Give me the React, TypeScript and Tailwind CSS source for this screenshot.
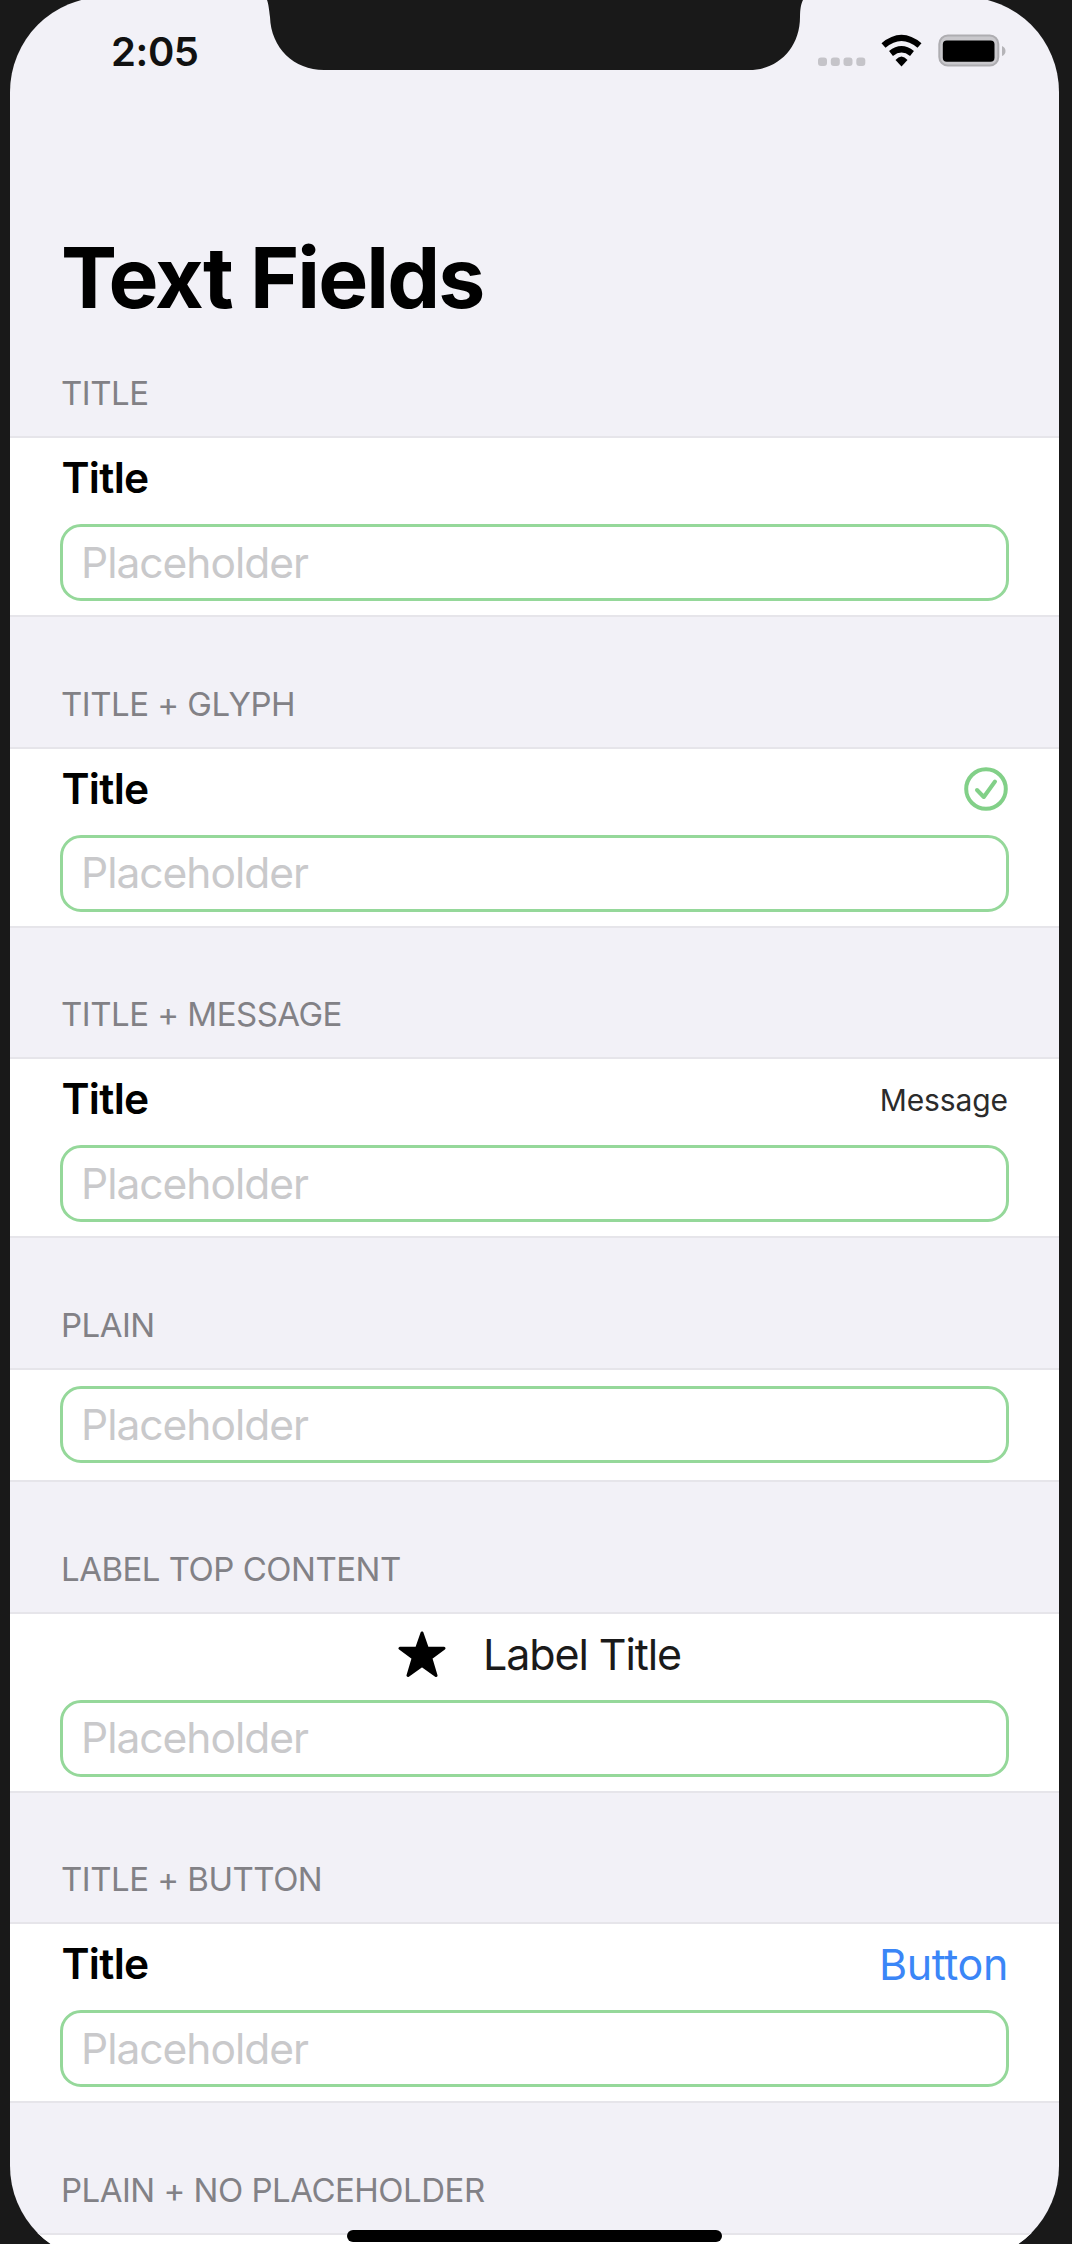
import type { ReactNode } from "react";

function Notch() {
  return (
    <svg className="absolute left-[257px] top-[3px]" width="537" height="71" viewBox="0 0 537 71" fill="#191919">
      <path d="M0 0C1.500 4 2 9 3 17C4 48 27 70 57 70H482C511 70 533 48 533 17C533 9 534 4 536 0Z" />
    </svg>
  );
}

function StatusIcons() {
  return (
    <svg className="absolute left-[806px] top-[34px]" width="192" height="40" viewBox="0 0 192 40">
      <g fill="#c5c4c9">
        <rect x="2" y="26.500" width="9" height="8.500" rx="3" />
        <rect x="14.800" y="26.500" width="9" height="8.500" rx="3" />
        <rect x="27.500" y="26.500" width="9" height="8.500" rx="3" />
        <rect x="40.300" y="26.500" width="9" height="8.500" rx="3" />
      </g>
      <g fill="none" stroke="#000" strokeWidth="6.200">
        <path d="M67.500 14.500Q85.500 -0.800 103.500 14.500" />
        <path d="M75 22.500Q85.500 14 96 22.500" />
      </g>
      <path d="M79.500 29Q85.500 22 91.500 29L85.500 35.500Z" />
      <rect x="123.300" y="4.500" width="59" height="30" rx="8.500" fill="#c9c8cc" stroke="#aeadb1" strokeWidth="2" />
      <rect x="126.800" y="9.500" width="51.700" height="21.200" rx="4" />
      <path d="M186 15Q189.500 16.500 189.500 20Q189.500 23.500 186 25Z" fill="#b5b4b8" />
    </svg>
  );
}

function CheckGlyph() {
  return (
    <svg width="44" height="44" viewBox="0 0 44 44" fill="none" stroke="#82d088" strokeWidth="4">
      <circle cx="22" cy="22" r="19.800" />
      <path d="M13 23L19.800 30L31 14.500" strokeLinejoin="round" strokeLinecap="round" />
    </svg>
  );
}

function StarGlyph() {
  return (
    <svg width="48" height="47" viewBox="0 0 48 47" stroke="#000" strokeWidth="3" strokeLinejoin="round">
      <path d="M24 2L29.300 17.300H46L32.800 27L38 44.500L24 34.500L10 44.500L15.200 27L2 17.300H18.700Z" />
    </svg>
  );
}

function Field() {
  return (
    <div className="flex h-[77px] w-[949px] shrink-0 items-center rounded-[21px] border-[3px] border-[#95d89a] pl-[18px] pt-[1px] text-[42.5px] leading-none tracking-[-1px] text-[#c9c9cb]">
      Placeholder
    </div>
  );
}

type SectionProps = { header: string; children?: ReactNode; kind?: "labelled" | "plain" | "empty" };

function Section({ header, children, kind = "labelled" }: SectionProps) {
  return (
    <section>
      <h2 className="flex h-[129.500px] items-end pb-[23px] pl-[51px] text-[33px] leading-[40px] tracking-[-0.500px] text-[#828186]">
        {header}
      </h2>
      <div className="border-y-2 border-[#e6e5ea] bg-white pl-[50px]">
        {kind === "labelled" && (
          <div className="h-[177px]">
            <div className="flex h-[86px] w-[948px] items-center justify-between pb-[5px] pl-[1.500px]">{children}</div>
            <Field />
          </div>
        )}
        {kind === "plain" && (
          <div className="flex h-[110.500px] items-center">
            <Field />
          </div>
        )}
        {kind === "empty" && <div className="h-[110px]" />}
      </div>
    </section>
  );
}

function Title() {
  return <span className="text-[42.500px] font-semibold leading-none tracking-[-0.700px] text-black">Title</span>;
}

export default function App() {
  return (
    <div className="h-[2244px] w-[1072px] overflow-hidden bg-[#191919] font-['Inter',sans-serif]">
      <main className="relative -mt-[3px] ml-[10px] h-[2264px] w-[1049px] overflow-hidden rounded-[95px] bg-[#f2f1f7]">
        <Notch />
        <StatusIcons />
        <header className="h-[309.700px]">
          <div className="pl-[101px] pt-[31px] text-[40px] font-semibold leading-[48px] tracking-[-0.400px] text-[#111]">2:05</div>
          <h1 className="mt-[152px] pl-[51px] text-[84px] font-bold leading-[100px] tracking-[-1.900px] text-black">Text Fields</h1>
        </header>
        <Section header="TITLE">
          <Title />
        </Section>
        <Section header="TITLE + GLYPH">
          <Title />
          <CheckGlyph />
        </Section>
        <Section header="TITLE + MESSAGE">
          <Title />
          <span className="text-[30px] leading-none tracking-[-0.100px] text-[#2b2b2b]">Message</span>
        </Section>
        <Section header="PLAIN" kind="plain" />
        <Section header="LABEL TOP CONTENT">
          <div className="flex w-full items-center pl-[336.500px]">
            <StarGlyph />
            <span className="ml-[37px] text-[43px] leading-none tracking-[-1.100px] text-[#1a1a1a]">Label Title</span>
          </div>
        </Section>
        <Section header="TITLE + BUTTON">
          <Title />
          <button className="text-[43px] leading-none tracking-[-0.400px] text-[#3b86f7]">Button</button>
        </Section>
        <Section header="PLAIN + NO PLACEHOLDER" kind="empty" />
        <div className="absolute left-[337px] top-[2233px] h-[12px] w-[375px] rounded-full bg-black" />
      </main>
    </div>
  );
}
